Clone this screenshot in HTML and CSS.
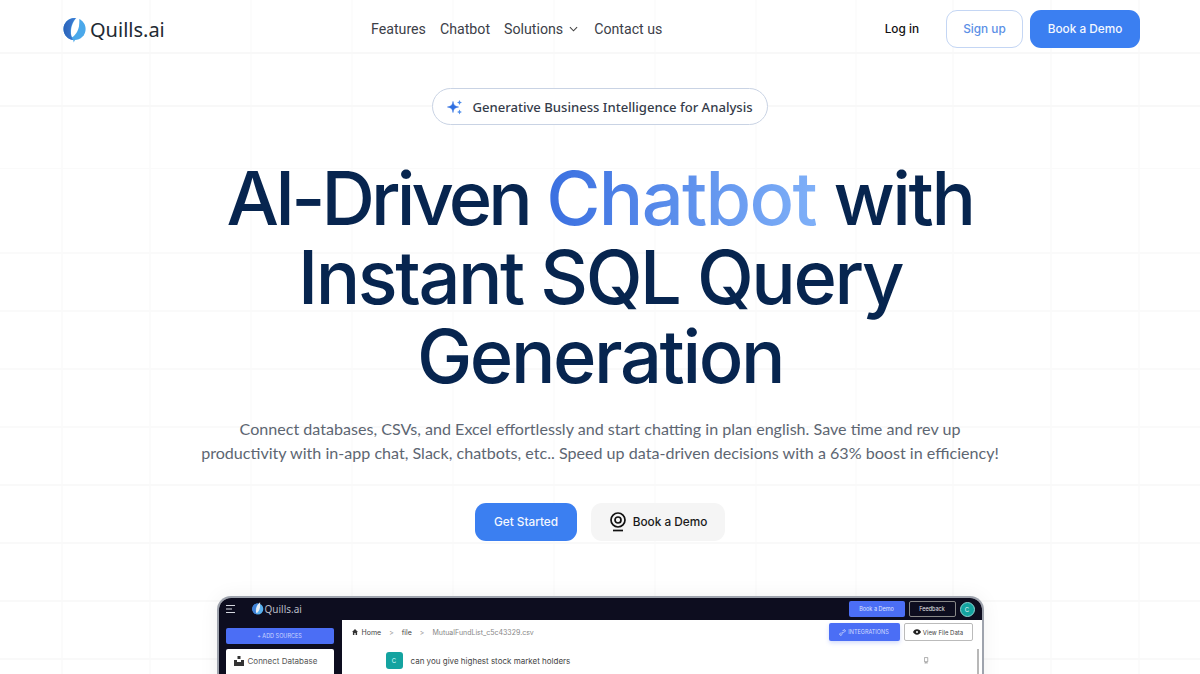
FILE: index.html
```html
<!DOCTYPE html>
<html lang="en">
<head>
<meta charset="utf-8">
<title>Quills.ai</title>
<link rel="stylesheet" href="styles.css">
</head>
<body>
<div class="page">
  <header class="nav">
    <a class="brand">
      <svg class="brand-logo" viewBox="0 0 26 30" aria-hidden="true">
        <defs><linearGradient id="lg" x1="0" x2="1" y1="0" y2="0"><stop offset="0" stop-color="#2a62b8"/><stop offset="1" stop-color="#3f7fd6"/></linearGradient></defs>
        <circle cx="12.500" cy="15" r="12" fill="#4aa8ea"/>
        <path d="M14 3.100C6.500 2.300.5 8 .5 15c0 6.500 5 11.500 10.500 12-3-4.500-3.500-9-2.500-13C9.300 10 11 6 14 3.100z" fill="url(#lg)"/>
        <path d="M17.500.5c-5.500 4-9.500 11-8.800 20 .2 1.500.6 2.500 1.300 3.500 3-2 6.500-6.500 7.300-12 .5-4 .5-8 .2-11.500z" fill="#fff"/>
        <path d="M10 24c.7 2 1.200 3.500 1.700 5.500.5-1.500 1-2.500 1.800-3.200z" fill="#4aa8ea"/>
      </svg>
      <span class="brand-name">Quills.ai</span>
    </a>
    <nav class="nav-links">
      <a>Features</a>
      <a>Chatbot</a>
      <a class="has-caret">Solutions
        <svg class="caret" viewBox="0 0 10 6" aria-hidden="true"><path d="M1 1l4 4 4-4" fill="none" stroke="#444" stroke-width="1.200"/></svg>
      </a>
      <a>Contact us</a>
    </nav>
    <div class="nav-actions">
      <a class="login">Log in</a>
      <a class="btn btn-outline">Sign up</a>
      <a class="btn btn-primary btn-nav">Book a Demo</a>
    </div>
  </header>

  <main class="hero">
    <div class="pill">
      <svg class="sparkle" viewBox="0 0 16 16" aria-hidden="true">
        <path d="M6 2.500C6.500 6 7.500 7.200 11.500 8 7.500 8.800 6.500 10 6 13.500 5.500 10 4.500 8.800.5 8 4.500 7.200 5.500 6 6 2.500z" fill="#2f6fe0" stroke="#2f6fe0" stroke-width=".6"/>
        <path d="M12.500 1l.8 1.700 1.700.8-1.700.8-.8 1.700-.8-1.700-1.700-.8 1.700-.8zM12.500 10.500l.8 1.700 1.700.8-1.700.8-.8 1.700-.8-1.700-1.700-.8 1.700-.8z" fill="#4f8eea"/>
      </svg>
      <span>Generative Business Intelligence for Analysis</span>
    </div>
    <h1 class="title"><span class="tight">AI-Driven</span> <span class="accent">Chatbot</span> with<br>Instant SQL Query<br>Generation</h1>
    <p class="lead">Connect databases, CSVs, and Excel effortlessly and start chatting in plan english. Save time and rev up<br>productivity with in-app chat, Slack, chatbots, etc.. Speed up data-driven decisions with a 63% boost in efficiency!</p>
    <div class="cta">
      <a class="btn btn-primary btn-cta">Get Started</a>
      <a class="btn btn-soft btn-cta">
        <svg class="cam" viewBox="0 0 18 20" aria-hidden="true">
          <circle cx="9" cy="8" r="7" fill="none" stroke="#111" stroke-width="1.700"/>
          <circle cx="9" cy="8" r="3" fill="none" stroke="#111" stroke-width="1.700"/>
          <path d="M4 18.500h10" stroke="#111" stroke-width="1.700"/>
        </svg>
        Book a Demo
      </a>
    </div>

    <section class="app">
      <div class="app-bar">
        <div class="app-left">
          <svg class="menu" viewBox="0 0 10 10" aria-hidden="true"><path d="M0 1.500h9M0 5h6M0 8.500h9" stroke="#d5d8e0" stroke-width="1"/></svg>
          <svg class="app-logo" viewBox="0 0 26 30" aria-hidden="true">
            <circle cx="12.500" cy="15" r="12" fill="#58b0ee"/>
            <path d="M14 3.100C6.500 2.300.5 8 .5 15c0 6.500 5 11.500 10.500 12-3-4.500-3.500-9-2.500-13C9.300 10 11 6 14 3.100z" fill="#3f7fd6"/>
            <path d="M17.500.5c-5.500 4-9.500 11-8.800 20 .2 1.500.6 2.500 1.300 3.500 3-2 6.500-6.500 7.300-12 .5-4 .5-8 .2-11.500z" fill="#e8edf5"/>
          </svg>
          <span class="app-name">Quills.ai</span>
        </div>
        <div class="app-right">
          <span class="app-demo">Book a Demo</span>
          <span class="app-feedback">Feedback</span>
          <span class="app-avatar">C</span>
        </div>
      </div>
      <div class="app-body">
        <aside class="app-side">
          <div class="add-src">+ ADD SOURCES</div>
          <div class="connect">
            <svg class="db" viewBox="0 0 10 10" aria-hidden="true"><path d="M3.500 0h3v3h-3zM0 4h3v2h4V4h3v6H0z" fill="#333"/></svg>
            Connect Database
          </div>
        </aside>
        <div class="app-main">
          <div class="crumbs">
            <div class="crumb-path">
              <svg class="home" viewBox="0 0 10 10" aria-hidden="true"><path d="M5 0L0 5h1.500v5h2.500V6.500h2V10h2.500V5H10z" fill="#333"/></svg>
              <span class="c-home">Home</span><span class="c-sep">&gt;</span><span class="c-home">file</span><span class="c-sep">&gt;</span><span class="c-file">MutualFundList_c5c43329.csv</span>
            </div>
            <div class="crumb-btns">
              <span class="integr">
                <svg class="link" viewBox="0 0 10 10" aria-hidden="true"><path d="M4 6.500L6.500 4M3 5L1.500 6.500a1.400 1.400 0 0 0 2 2L5 7M5 3l1.500-1.500a1.400 1.400 0 0 1 2 2L7 5" fill="none" stroke="#fff" stroke-width="1"/></svg>
                INTEGRATIONS
              </span>
              <span class="view">
                <svg class="eye" viewBox="0 0 12 8" aria-hidden="true"><path d="M6 0C3 0 1 2 0 4c1 2 3 4 6 4s5-2 6-4c-1-2-3-4-6-4z" fill="#222"/><circle cx="6" cy="4" r="1.500" fill="#fff"/></svg>
                View File Data
              </span>
            </div>
          </div>
          <div class="chat">
            <span class="chat-avatar">C</span>
            <span class="chat-text">can you give highest stock market holders</span>
            <svg class="copy" viewBox="0 0 6 8" aria-hidden="true"><path d="M.5.500h4v5h-4zM1.500 5.500v2l1-1 1 1v-2" fill="none" stroke="#888" stroke-width=".8"/></svg>
            <span class="scrollbar"></span>
          </div>
        </div>
      </div>
    </section>
  </main>
</div>
</body>
</html>
```
FILE: styles.css
```css
* { box-sizing: border-box; }
html, body { margin: 0; padding: 0; height: 100%; overflow: hidden; }
body {
  position: relative;
  background-color: #fff;
  font-family: "Lato", sans-serif;
}
/* faint decorative grid behind the page */
body::before {
  content: "";
  position: absolute;
  inset: 0;
  z-index: -1;
  background-color: #fff;
  background-image:
    linear-gradient(#f8f8f8, #f8f8f8), linear-gradient(#f8f8f8, #f8f8f8), linear-gradient(#fafafa, #fafafa),
    linear-gradient(#fafafa, #fafafa), linear-gradient(#fafafa, #fafafa), linear-gradient(#fafafa, #fafafa), linear-gradient(#fafafa, #fafafa),
    linear-gradient(#f9f9f9, #f9f9f9), linear-gradient(#f9f9f9, #f9f9f9), linear-gradient(#f9f9f9, #f9f9f9), linear-gradient(#f9f9f9, #f9f9f9),
    linear-gradient(#fbfbfb, #fbfbfb), linear-gradient(#fbfbfb, #fbfbfb), linear-gradient(#fcfcfc, #fcfcfc), linear-gradient(#fcfcfc, #fcfcfc),
    linear-gradient(#fcfcfc, #fcfcfc), linear-gradient(#fcfcfc, #fcfcfc), linear-gradient(#fcfcfc, #fcfcfc), linear-gradient(#fcfcfc, #fcfcfc),
    linear-gradient(#fcfcfc, #fcfcfc), linear-gradient(#fbfbfb, #fbfbfb), linear-gradient(#fbfbfb, #fbfbfb), linear-gradient(#fbfbfb, #fbfbfb);
  background-repeat: no-repeat;
  background-size:
    100% 2px, 100% 2px, 100% 1px,
    100% 2px, 100% 2px, 100% 2px, 100% 2px,
    100% 2px, 100% 2px, 100% 2px, 100% 2px,
    2px 100%, 2px 100%, 2px 100%, 2px 100%,
    2px 100%, 2px 100%, 2px 100%, 2px 100%,
    2px 100%, 2px 100%, 2px 100%, 2px 100%;
  background-position:
    0 52px, 0 105px, 0 168px,
    0 252px, 0 310px, 0 368px, 0 426px,
    0 484px, 0 542px, 0 600px, 0 658px,
    61px 0, 149px 0, 250px 0, 351px 0,
    452px 0, 553px 0, 654px 0, 755px 0,
    855px 0, 952px 0, 1050px 0, 1138px 0;
}
.page { width: 1200px; height: 674px; overflow: hidden; }

.nav {
  height: 58px;
  display: flex;
  align-items: center;
  padding: 0 60px 0 63px;
}
.brand { display: flex; align-items: center; gap: 3px; width: 308px; }
.brand-logo { width: 24px; height: 28px; }
.brand-name { font-family: "Noto Sans", sans-serif; font-size: 20px; color: #222a33; }
.nav-links { display: flex; align-items: center; gap: 14px; font-family: "Roboto", sans-serif; font-size: 14.200px; color: #3c4048; }
.has-caret { display: flex; align-items: center; gap: 6px; margin-right: 2px; }
.caret { width: 9px; height: 6px; }
.nav-actions { margin-left: auto; display: flex; align-items: center; font-family: "Inter", sans-serif; font-weight: 500; font-size: 11.800px; }
.login { color: #111; margin-right: 27px; }
.btn {
  display: flex;
  align-items: center;
  justify-content: center;
  border-radius: 11px;
  font-family: "Inter", sans-serif;
  font-weight: 500;
  font-size: 11.800px;
}
.btn-outline { width: 77px; height: 38px; border: 1.500px solid #c4d6f4; color: #5b8fe6; background: #fff; margin-right: 7px; }
.btn-primary { background: #3b7ff1; color: #f3f7ff; }
.btn-nav { width: 110px; height: 38px; }

.hero { display: flex; flex-direction: column; align-items: center; }
.pill {
  margin-top: 30px;
  width: 336px;
  height: 37px;
  display: flex;
  align-items: center;
  justify-content: center;
  gap: 9px;
  background: #fff;
  border: 1.500px solid #c9d3e4;
  border-radius: 19px;
  font-family: "Noto Sans", sans-serif;
  font-weight: 500;
  font-size: 13.100px;
  color: #353c4a;
}
.sparkle { width: 16px; height: 16px; }
.title {
  margin: 34px 0 0;
  font-family: "Inter", sans-serif;
  font-weight: 500;
  font-size: 74px;
  line-height: 79px;
  letter-spacing: -2.400px;
  text-align: center;
  color: #07254f;
}
.tight { letter-spacing: -3.900px; }
.accent {
  letter-spacing: -1.700px;
  background: linear-gradient(90deg, #3a6fe0, #7fb0f8);
  -webkit-background-clip: text;
  background-clip: text;
  color: transparent;
}
.lead {
  margin: 21px 0 0;
  font-size: 16.100px;
  line-height: 24px;
  text-align: center;
  color: #5d6672;
}
.cta { display: flex; gap: 14px; margin-top: 38px; }
.btn-cta { height: 38px; }
.btn-cta.btn-primary { width: 102px; }
.btn-soft { width: 134px; background: #f5f5f5; color: #1a1a1a; gap: 6px; }
.cam { width: 18px; height: 20px; }

.app {
  margin-top: 55px;
  width: 767px;
  height: 200px;
  flex: none;
  background: #fff;
  border: 2px solid #9ea3ad;
  border-bottom: 0;
  border-radius: 14px 14px 0 0;
  overflow: hidden;
  font-family: "Inter", sans-serif;
  box-shadow: 0 0 20px rgba(0, 0, 0, .06);
}
.app-bar {
  height: 22px;
  background: #0d0d1f;
  display: flex;
  align-items: center;
  justify-content: space-between;
  padding: 0 7px;
}
.app-left { display: flex; align-items: center; }
.menu { width: 10px; height: 10px; margin-right: 16px; }
.app-logo { width: 12px; height: 14px; }
.app-name { font-family: "Noto Sans", sans-serif; color: #b8bcc5; font-size: 10px; margin-left: 1px; }
.app-right { display: flex; align-items: center; gap: 4px; }
.app-demo { width: 56px; height: 16px; background: #4b6ef5; border-radius: 2px; color: #dfe5ff; font-size: 5.500px; display: flex; align-items: center; justify-content: center; }
.app-feedback { width: 47px; height: 16px; border: 1px solid #888; border-radius: 2px; color: #e4e4e8; font-size: 5.500px; display: flex; align-items: center; justify-content: center; }
.app-avatar { width: 15px; height: 15px; border-radius: 50%; background: #14a3a0; border: 1px solid #8fd5d3; color: #e0f5f5; font-size: 6px; display: flex; align-items: center; justify-content: center; }
.app-body { display: flex; }
.app-side { width: 123px; height: 180px; background: #0d0d1f; padding: 8px 8px 0 7px; flex: none; }
.add-src { height: 16px; background: #4b6ef5; border-radius: 2px; color: #cdd6ff; font-size: 5.500px; display: flex; align-items: center; justify-content: center; }
.connect { margin-top: 5px; height: 30px; background: #fff; border-radius: 2px; font-size: 8px; color: #555; display: flex; align-items: flex-start; gap: 4px; padding: 7px 8px; }
.db { width: 10px; height: 10px; }
.app-main { flex: 1; padding: 3px 9px 0 8px; }
.crumbs { display: flex; justify-content: space-between; align-items: center; height: 18px; }
.crumb-path { display: flex; align-items: center; font-size: 7px; color: #444; gap: 3px; padding-left: 2px; }
.home { width: 6px; height: 6px; margin-right: 1px; }
.c-sep { margin: 0 5px; color: #888; }
.c-file { color: #888; font-size: 7px; }
.crumb-btns { display: flex; gap: 4px; align-items: center; }
.integr { width: 71px; height: 18px; background: #4b6ef5; border-radius: 2px; color: #d5dcff; font-size: 5.500px; display: flex; align-items: center; justify-content: center; gap: 2px; box-shadow: 0 2px 4px rgba(75, 110, 245, .25); }
.link { width: 7px; height: 7px; }
.view { width: 69px; height: 18px; background: #fff; border: 1px solid #bbb; border-radius: 2px; color: #444; font-size: 6px; display: flex; align-items: center; justify-content: center; gap: 2px; }
.eye { width: 8px; height: 6px; }
.chat { display: flex; align-items: center; padding: 11px 36px 0 36px; position: relative; }
.chat-avatar { width: 17px; height: 17px; background: #14a3a0; border-radius: 3px; color: #dff; font-size: 6px; display: flex; align-items: center; justify-content: center; margin-right: 8px; }
.chat-text { font-size: 8px; color: #444; flex: 1; }
.copy { width: 5px; height: 7px; margin-right: 8px; }
.scrollbar { position: absolute; right: -6px; top: 8px; width: 2px; height: 40px; background: #b8b8b8; }
```
